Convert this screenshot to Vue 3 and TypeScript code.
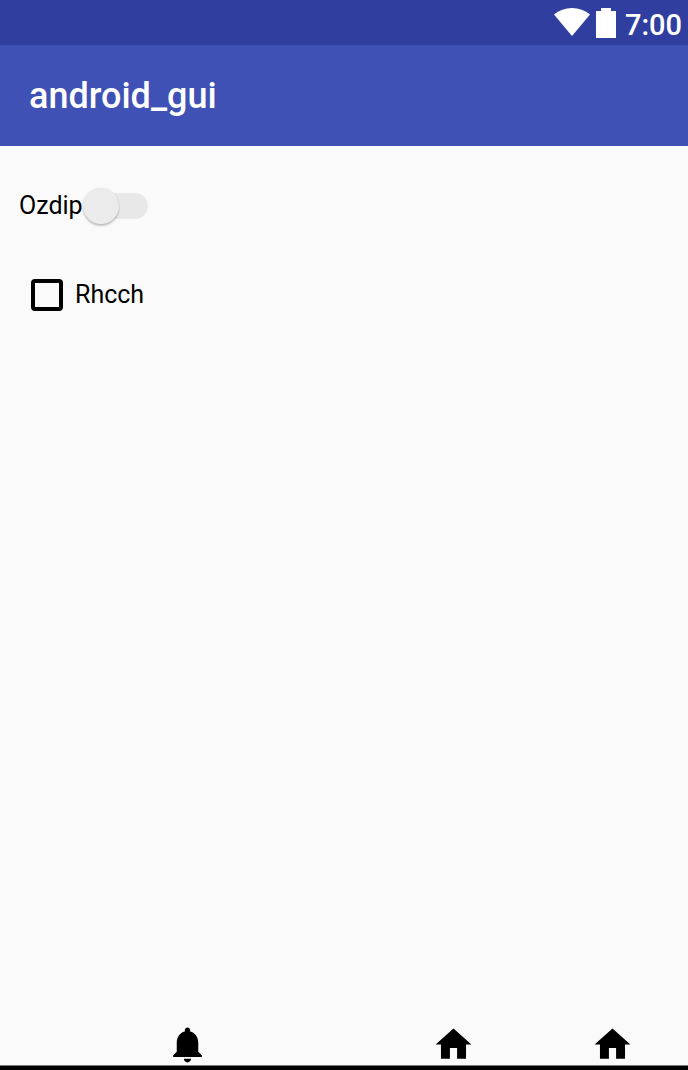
<script setup lang="ts">
import { ref } from 'vue'

interface NavItem {
  label: string
  path: string
}

const enabled = ref(false)
const checked = ref(false)

const bell =
  'M12 22c1.1 0 2-.9 2-2h-4c0 1.1.89 2 2 2zm6-6v-5c0-3.07-1.64-5.64-4.5-6.32V4c0-.83-.67-1.5-1.5-1.5s-1.5.67-1.5 1.5v.68C7.63 5.36 6 7.92 6 11v5l-2 2v1h16v-1l-2-2z'
const home = 'M10 20v-6h4v6h5v-8h3L12 3 2 12h3v8z'

const navItems: NavItem[] = [
  { label: 'Notifications', path: bell },
  { label: 'Home', path: home },
  { label: 'Home', path: home },
]
</script>

<template>
  <div class="screen">
    <div class="status">
      <svg class="wifi" viewBox="0 0 36 28" aria-hidden="true">
        <path d="M0 6.5C5 2.300 11 0 18 0s13 2.300 18 6.500L18 28z" />
      </svg>
      <svg class="battery" viewBox="0 0 20 30" aria-hidden="true">
        <path d="M5 0h10v3h5v27H0V3h5z" />
      </svg>
      <span class="time">7:00</span>
    </div>
    <header class="bar">
      <h1>android_gui</h1>
    </header>
    <main class="content">
      <label class="row switch-row">
        <span>Ozdip</span>
        <input v-model="enabled" class="switch" type="checkbox" role="switch" />
      </label>
      <label class="row check-row">
        <input v-model="checked" class="check" type="checkbox" />
        <span>Rhcch</span>
      </label>
    </main>
    <nav class="nav">
      <button v-for="(item, i) in navItems" :key="i" type="button" :aria-label="item.label">
        <svg viewBox="0 0 24 24" aria-hidden="true"><path :d="item.path" /></svg>
      </button>
    </nav>
    <div class="edge"></div>
  </div>
</template>

<style>
body {
  background: #fafafa;
}
</style>

<style scoped>
.screen {
  display: flex;
  flex-direction: column;
  min-height: 100vh;
  overflow: hidden;
  background: #fafafa;
  color: #000;
  font-family: Roboto, sans-serif;
}
.status {
  display: flex;
  align-items: flex-start;
  justify-content: flex-end;
  box-sizing: border-box;
  height: 45px;
  padding: 8px 6px 0 0;
  background: #303f9f;
  color: #fff;
}
.status svg {
  fill: #fff;
}
.wifi {
  width: 36px;
  height: 28px;
  margin-right: 6px;
}
.battery {
  width: 20px;
  height: 30px;
  margin-right: 9px;
}
.time {
  font-size: 29px;
  font-weight: 500;
  line-height: 34px;
}
.bar {
  display: flex;
  align-items: center;
  height: 101px;
  padding: 0 29px;
  background: #3f51b5;
  color: #fff;
}
h1 {
  margin: 0;
  font-size: 36px;
  font-weight: 500;
  line-height: 44px;
}
.content {
  display: flex;
  flex: 1;
  flex-direction: column;
  align-items: flex-start;
  gap: 49px;
  padding: 40px 19px;
}
.row {
  display: flex;
  align-items: center;
  height: 40px;
  font-size: 25px;
  line-height: 32px;
}
input {
  appearance: none;
  box-sizing: border-box;
  flex: none;
  margin: 0;
}
.switch {
  display: flex;
  align-items: center;
  width: 65px;
  height: 26px;
  border-radius: 13px;
  background: #e8e8e8;
}
.switch::before {
  width: 36px;
  height: 36px;
  border-radius: 50%;
  background: #ebebeb;
  box-shadow: 0 2px 2px rgba(0, 0, 0, 0.22), 0 0 2px rgba(0, 0, 0, 0.08);
  content: '';
}
.switch:checked {
  justify-content: flex-end;
}
.check-row {
  gap: 12px;
  padding-left: 12px;
}
.check {
  width: 32px;
  height: 32px;
  border: 4px solid #000;
  border-radius: 4px;
}
.check:checked {
  background: #000;
}
.nav {
  display: grid;
  grid-template-columns: 374fr 158fr 160fr;
  margin: 0 -4px -1px 0;
}
.nav button {
  display: flex;
  justify-content: center;
  padding: 0;
  border: 0;
  background: none;
}
.nav svg {
  width: 43px;
  height: 43px;
}
.edge {
  height: 4px;
  border-top: 1px solid #777;
  background: #000;
}
</style>
